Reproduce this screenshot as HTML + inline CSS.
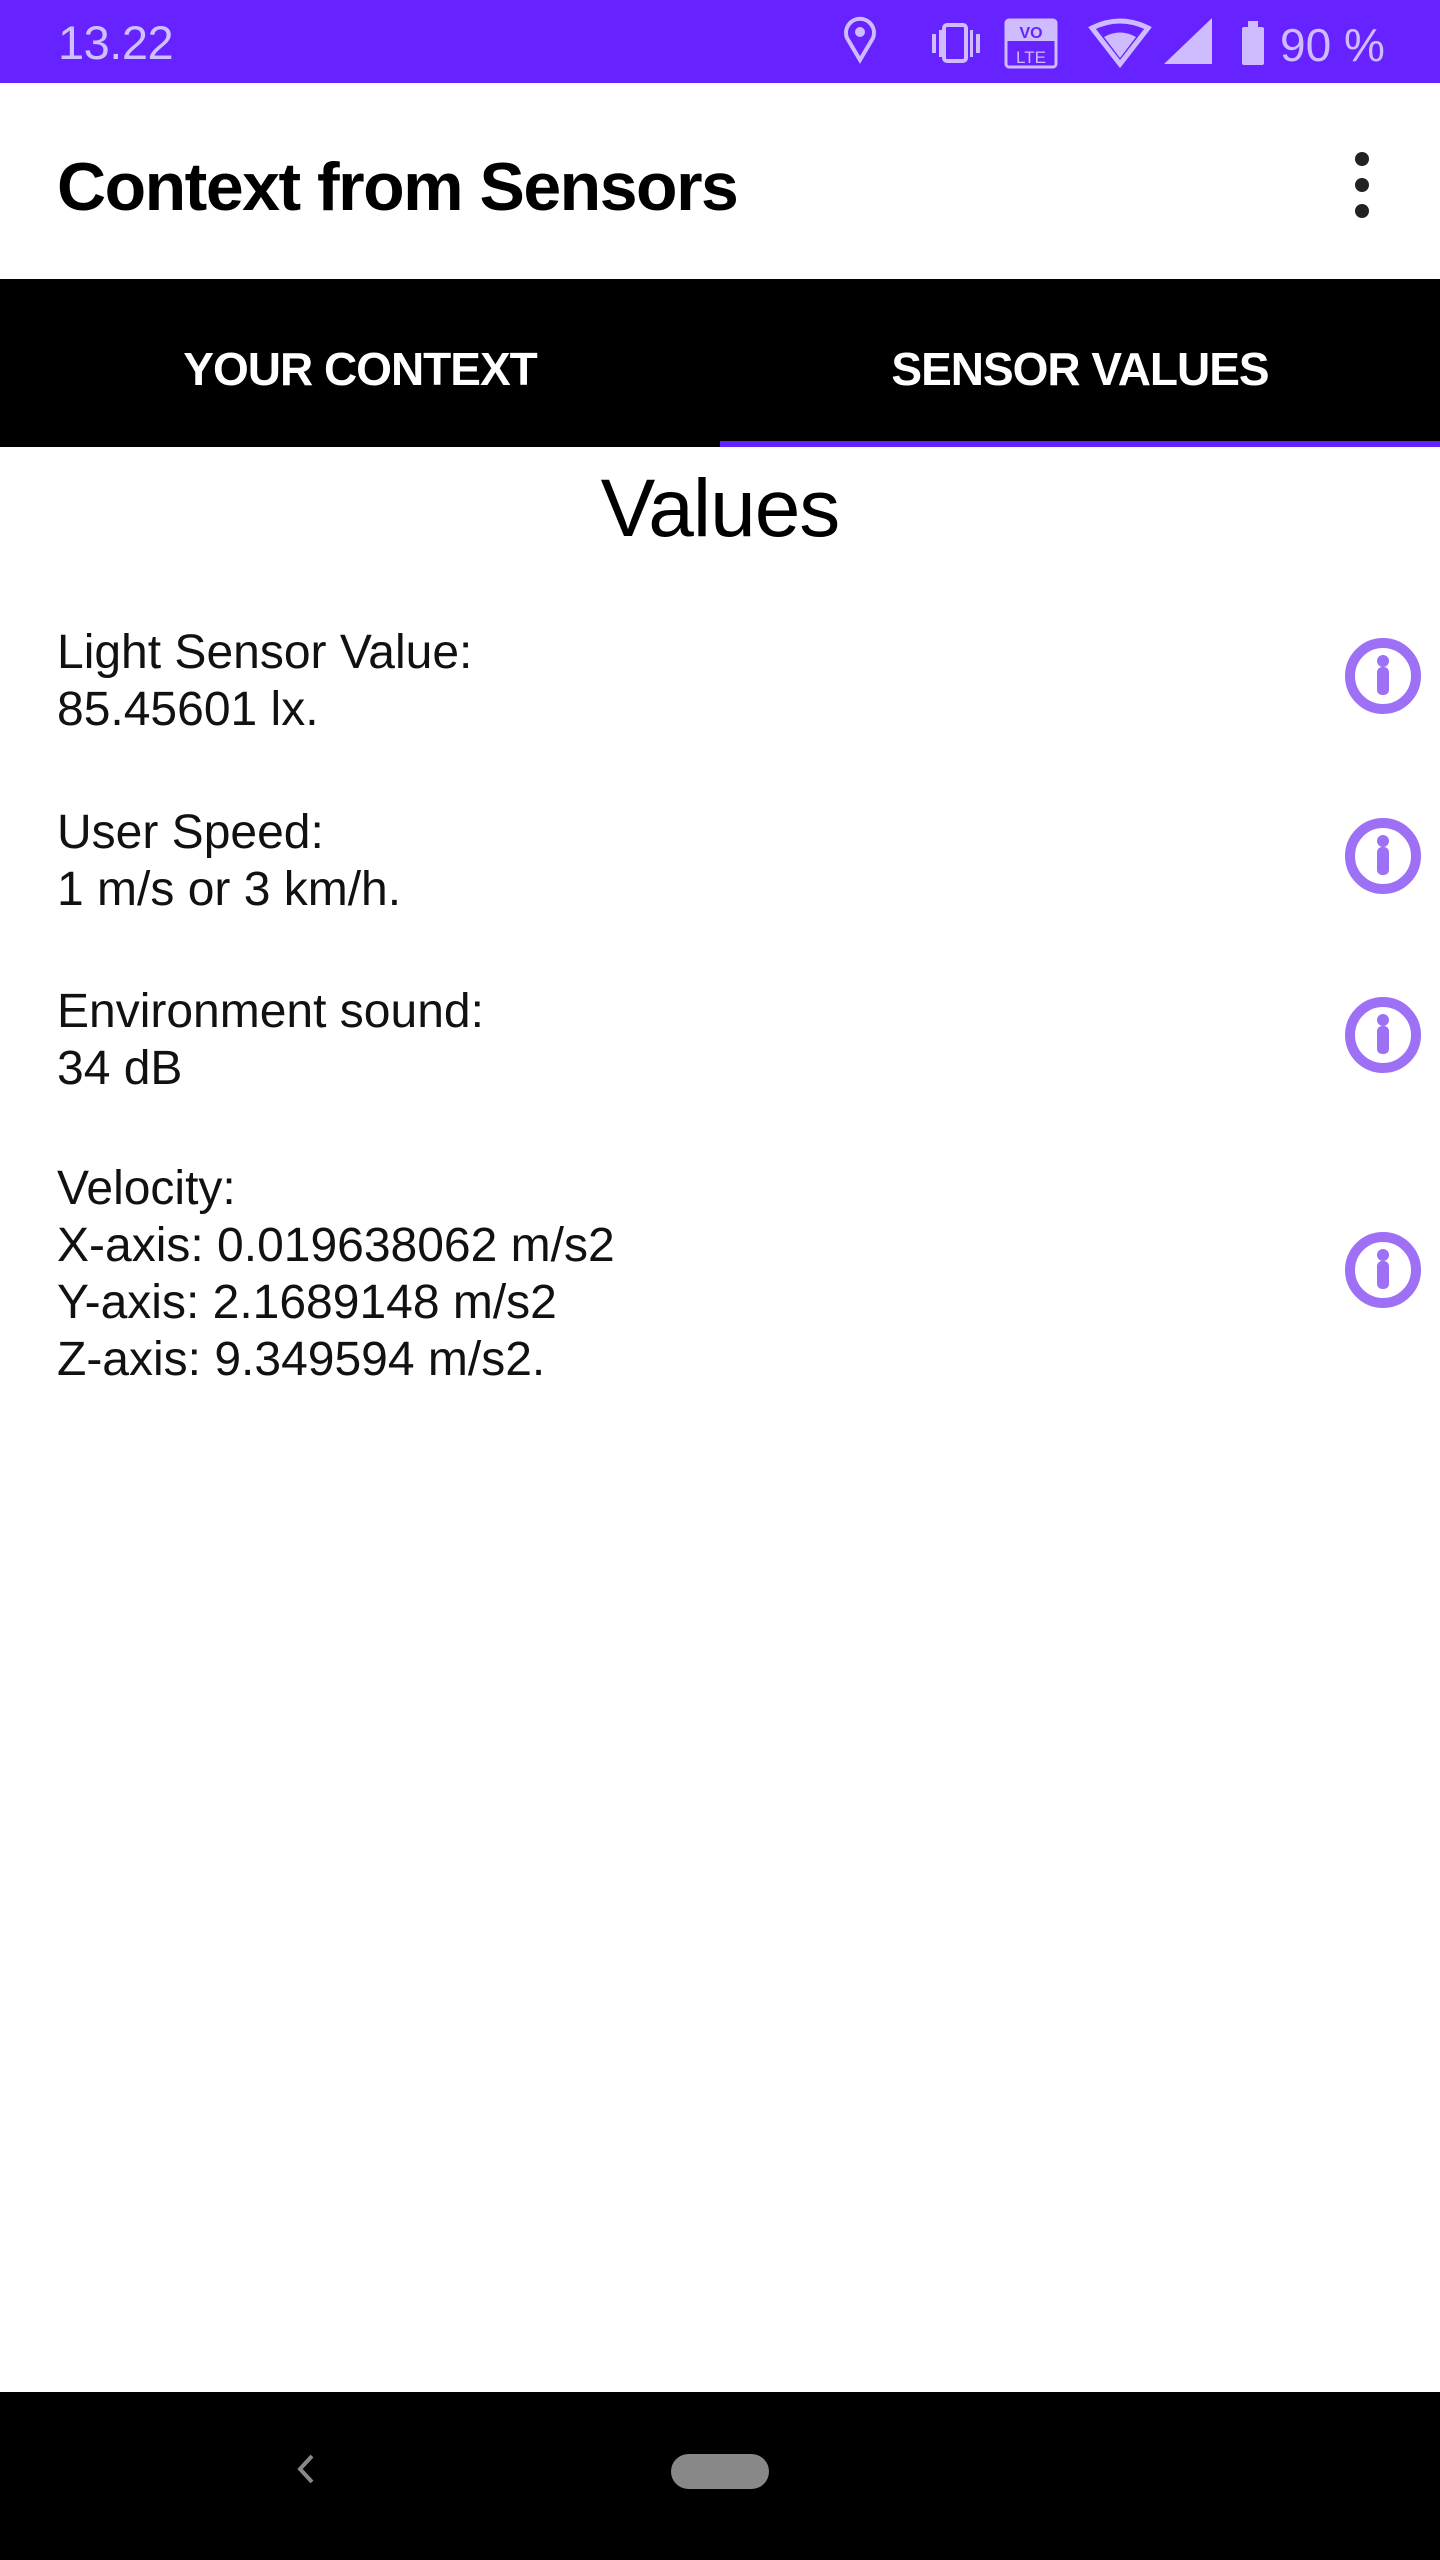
<!DOCTYPE html>
<html><head><meta charset="utf-8"><style>
*{margin:0;padding:0;box-sizing:border-box}
body{width:1440px;height:2560px;position:relative;background:#fff;font-family:"Liberation Sans",sans-serif;overflow:hidden}
.a{position:absolute;white-space:nowrap;line-height:1}
.t{font-size:48px;color:#111;letter-spacing:0px}
.ic{position:absolute;left:1345px;width:76px;height:76px}
</style></head><body>
<div class="a" style="left:0;top:0;width:1440px;height:83px;background:#6622ff"></div>
<div class="a" style="left:58px;top:19px;font-size:47px;color:#cfc0ff;letter-spacing:-0.5px">13.22</div>
<svg class="a" style="left:840px;top:16px" width="560" height="60" viewBox="0 0 560 60">
<g fill="#cfbcff" stroke="#cfbcff">
<path d="M20 44 L7 22 A14 14 0 1 1 33 22 Z" fill="none" stroke-width="4"/>
<circle cx="20" cy="16" r="5" stroke="none"/>
<rect x="104" y="9" width="22" height="36" rx="3" fill="none" stroke-width="4"/>
<rect x="92" y="18" width="4" height="19" stroke="none"/><rect x="99" y="14" width="3" height="27" stroke="none"/>
<rect x="130" y="14" width="3" height="27" stroke="none"/><rect x="136" y="18" width="4" height="19" stroke="none"/>
<rect x="166" y="4" width="50" height="47" rx="3" fill="none" stroke-width="3"/>
<rect x="166" y="4" width="50" height="21" stroke="none"/>
<text x="191" y="22" font-size="16" font-weight="bold" text-anchor="middle" fill="#6622ff" stroke="none" font-family="Liberation Sans">VO</text>
<text x="191" y="47" font-size="17" text-anchor="middle" stroke="none" font-family="Liberation Sans">LTE</text>
<path d="M252 12 Q280 -2 308 12 L280 48 Z" fill="none" stroke-width="5"/>
<path d="M264 21 Q280 12 296 21 L280 42 Z" stroke="none"/>
<path d="M324 48 L372 2 L372 48 Z" stroke="none"/>
<rect x="402" y="11" width="22" height="38" rx="2" stroke="none"/><rect x="408" y="5" width="10" height="6" stroke="none"/>
<text x="440" y="45" font-size="46" stroke="none" font-family="Liberation Sans">90 %</text>
</g></svg>
<div class="a" style="left:57px;top:153px;font-size:68px;font-weight:bold;color:#000;letter-spacing:-1.5px">Context from Sensors</div>
<div class="a" style="left:1355px;top:152px;width:14px;height:14px;border-radius:50%;background:#222"></div>
<div class="a" style="left:1355px;top:178px;width:14px;height:14px;border-radius:50%;background:#222"></div>
<div class="a" style="left:1355px;top:204px;width:14px;height:14px;border-radius:50%;background:#222"></div>
<div class="a" style="left:0;top:279px;width:1440px;height:168px;background:#000"></div>
<div class="a" style="left:0;top:346px;width:720px;text-align:center;font-size:46px;font-weight:bold;color:#fff;letter-spacing:-1px">YOUR CONTEXT</div>
<div class="a" style="left:720px;top:346px;width:720px;text-align:center;font-size:46px;font-weight:bold;color:#fff;letter-spacing:-1px">SENSOR VALUES</div>
<div class="a" style="left:720px;top:441px;width:720px;height:6px;background:#6622ff"></div>
<div class="a" style="left:0;top:468px;width:1440px;text-align:center;font-size:82px;color:#000;letter-spacing:-1px">Values</div>
<div class="a t" style="left:57px;top:624px;line-height:57px;white-space:pre">Light Sensor Value:
85.45601 lx.</div>
<div class="a t" style="left:57px;top:804px;line-height:57px;white-space:pre">User Speed:
1 m/s or 3 km/h.</div>
<div class="a t" style="left:57px;top:983px;line-height:57px;white-space:pre">Environment sound:
34 dB</div>
<div class="a t" style="left:57px;top:1160px;line-height:57px;white-space:pre">Velocity:
X-axis: 0.019638062 m/s2
Y-axis: 2.1689148 m/s2
Z-axis: 9.349594 m/s2.</div>
<svg width="0" height="0" style="position:absolute"><defs><g id="i"><circle cx="38" cy="38" r="33" fill="none" stroke="#9d70f6" stroke-width="10"/><circle cx="38" cy="23" r="6" fill="#9d70f6"/><rect x="32" y="29" width="12" height="28" rx="5" fill="#9d70f6"/></g></defs></svg>
<svg class="ic" style="top:638px" viewBox="0 0 76 76"><use href="#i"/></svg>
<svg class="ic" style="top:818px" viewBox="0 0 76 76"><use href="#i"/></svg>
<svg class="ic" style="top:997px" viewBox="0 0 76 76"><use href="#i"/></svg>
<svg class="ic" style="top:1232px" viewBox="0 0 76 76"><use href="#i"/></svg>
<div class="a" style="left:0;top:2392px;width:1440px;height:168px;background:#000"></div>
<svg class="a" style="left:290px;top:2450px" width="30" height="40"><path d="M22 6 L10 19 L22 32" fill="none" stroke="#888" stroke-width="4"/></svg>
<div class="a" style="left:671px;top:2454px;width:98px;height:35px;border-radius:18px;background:#888"></div>
</body></html>
